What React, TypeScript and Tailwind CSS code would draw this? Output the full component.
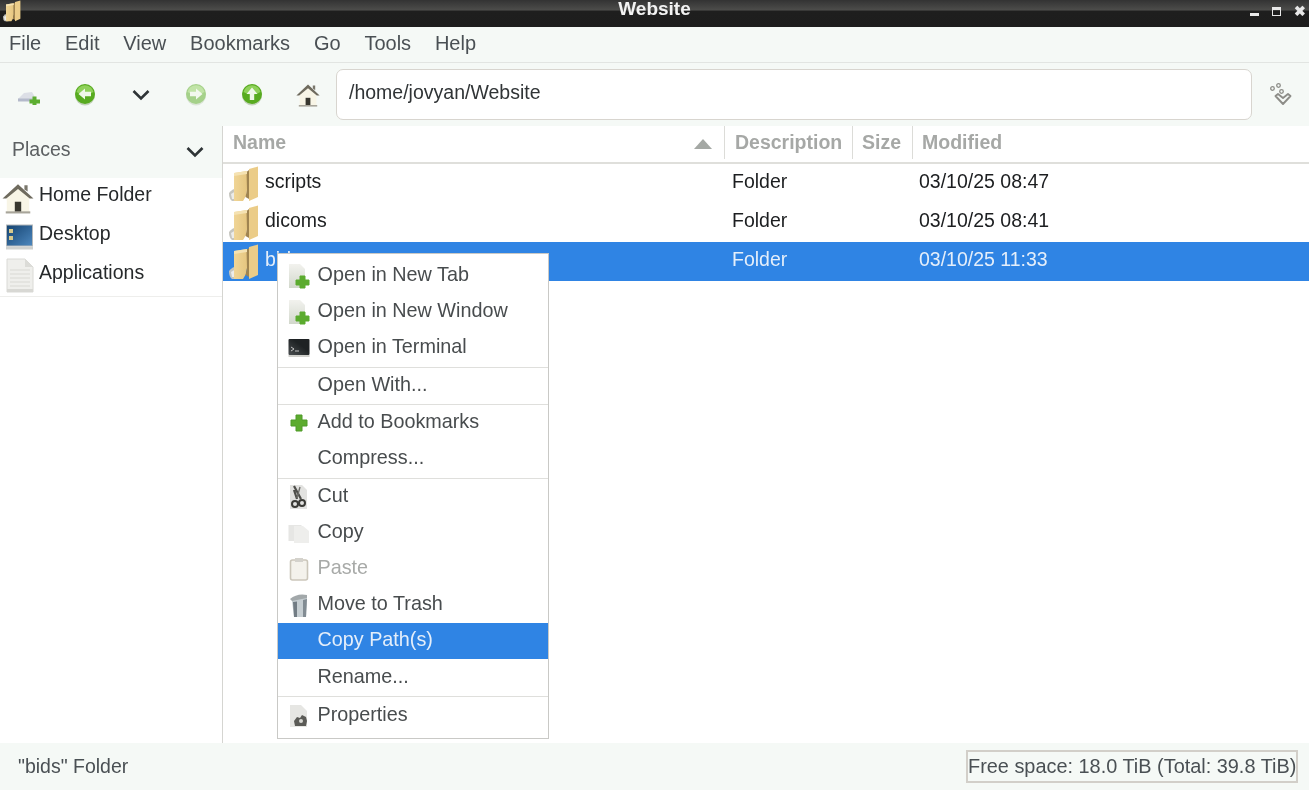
import type { ReactNode } from 'react';

const FolderIcon = ({ small = false }: { small?: boolean }) => (
  <svg viewBox="0 0 30 36" className={small ? 'h-[22px] w-[18px] shrink-0' : 'h-[36px] w-[30px] shrink-0'}>
    <defs>
      <linearGradient id="tan" x1="0" y1="0" x2="1" y2="0">
        <stop offset="0" stopColor="#f0d596" />
        <stop offset="1" stopColor="#e6c680" />
      </linearGradient>
    </defs>
    <path d="M0 27 Q3 23 8 22 L9 35 L3 35 Q0 33 0 27Z" fill="#c6c6c0" />
    <path d="M2 28 L7 25 L7 33 L3 33Z" fill="#ececea" />
    <path d="M5 7 Q12 6 18 5 L18 24 L17 30 L14 35 L5 35Z" fill="url(#tan)" />
    <path d="M17.5 6 L20 4 L20 33 L16.5 31 L18 24Z" fill="#a08450" />
    <path d="M20 3 L29 0.5 L29 31 L20 35Z" fill="#ebcc88" />
    <path d="M5 7 L18 5 L18 8 L5 10Z" fill="#f5e2b2" />
  </svg>
);

const GreenCircle = ({ dir, faded = false }: { dir: 'left' | 'right' | 'up'; faded?: boolean }) => {
  const arrow =
    dir === 'left'
      ? 'M4.5 11 L11 5.5 L11 8.8 L17 8.8 L17 13.2 L11 13.2 L11 16.5Z'
      : dir === 'right'
        ? 'M17.5 11 L11 5.5 L11 8.8 L5 8.8 L5 13.2 L11 13.2 L11 16.5Z'
        : 'M11 4.5 L16.5 11 L13.2 11 L13.2 17 L8.8 17 L8.8 11 L5.5 11Z';
  return (
    <svg viewBox="0 0 22 24" className={`h-[24px] w-[22px] ${faded ? 'opacity-50' : ''}`}>
      <circle cx="11" cy="12.5" r="10" fill="#c4d2bc" />
      <circle cx="11" cy="11" r="10" fill="#58ab20" />
      <path d="M2.5 9 A8.6 8 0 0 1 19.5 9 Q11 14 2.5 9Z" fill="#8fd15a" />
      <path d={arrow} fill="#f0f8e8" />
    </svg>
  );
};

const Chevron = () => (
  <svg viewBox="0 0 18 12" className="h-[12px] w-[18px]">
    <path d="M1.5 2 L9 9.5 L16.5 2" fill="none" stroke="#2e3436" strokeWidth="2.6" />
  </svg>
);

const HomeIcon = ({ big = false }: { big?: boolean }) => (
  <svg viewBox="0 0 30 30" className={big ? 'h-[32px] w-[32px] shrink-0' : 'h-[24px] w-[24px] shrink-0'}>
    <path d="M21 3 L24 3 L24 9 L21 7Z" fill="#7a776c" />
    <path d="M4.5 14 L15 5 L25.5 14 L25.5 28 L4.5 28Z" fill="#f8f5e6" />
    <path d="M0.5 15.5 L15 2 L29.5 15.5 L26 15.5 L15 6.5 L4 15.5Z" fill="#6f6b5e" />
    <path d="M12 18.5 L18 18.5 L18 28 L12 28Z" fill="#38372f" />
    <path d="M3.5 27.5 L26.5 27.5 L26.5 29.5 L3.5 29.5Z" fill="#a8a59a" />
  </svg>
);

const NewTabIcon = () => (
  <svg viewBox="0 0 24 16" className="h-[16px] w-[24px]">
    <path d="M1 10 L7 4 L15 3 L18 8 L18 12 L1 12Z" fill="#dcdfe6" />
    <path d="M1 9.5 L17 9.5 L17 12.5 L1 12.5Z" fill="#b4bacb" />
    <path d="M15.5 7.5 h4 v3 h3.5 v4 h-3.5 v1.5 h-4 v-1.5 h-3 v-4 h3Z" fill="#5cae30" />
  </svg>
);

const BookmarkGlyph = () => (
  <svg viewBox="0 0 24 24" className="h-[24px] w-[24px]">
    <g fill="none" stroke="#8d8d88" strokeWidth="1.3">
      <circle cx="3.5" cy="5.5" r="1.8" />
      <circle cx="9.5" cy="2.5" r="1.8" />
      <circle cx="12.5" cy="8.5" r="1.8" />
    </g>
    <path d="M6.5 13 L9 11 L14 15 L19 11 L21.5 13 L14 21Z" fill="#f5f9f6" stroke="#8d8d88" strokeWidth="1.9" strokeLinejoin="round" />
  </svg>
);

const DesktopIcon = () => (
  <svg viewBox="0 0 30 28" className="h-[28px] w-[30px] shrink-0">
    <defs>
      <linearGradient id="desk" x1="0" y1="0" x2="1" y2="1">
        <stop offset="0" stopColor="#14426f" />
        <stop offset="1" stopColor="#4d88bf" />
      </linearGradient>
    </defs>
    <rect x="1.5" y="2" width="26" height="21" fill="url(#desk)" stroke="#b4b8ba" strokeWidth="1" />
    <rect x="4" y="6" width="4" height="4" fill="#d8c98c" />
    <rect x="4" y="13" width="4" height="4" fill="#d8c98c" />
    <rect x="1" y="23.5" width="27" height="3" fill="#cfd1cf" />
  </svg>
);

const DocIcon = () => (
  <svg viewBox="0 0 28 36" className="h-[36px] w-[28px] shrink-0">
    <path d="M1 1 L19 1 L27 9 L27 34 L1 34Z" fill="#efefec" stroke="#dadad6" strokeWidth="1" />
    <path d="M19 1 L27 9 L19 9Z" fill="#dcdcd8" />
    <g stroke="#e0e0dc" strokeWidth="1.4">
      <path d="M4 12 H24" />
      <path d="M4 16 H24" />
      <path d="M4 20 H24" />
      <path d="M4 24 H24" />
      <path d="M4 28 H24" />
    </g>
    <path d="M1 31 H27 V34 H1Z" fill="#d8d8d4" />
  </svg>
);

const PageAddIcon = () => (
  <svg viewBox="0 0 22 26" className="h-[26px] w-[22px]">
    <defs>
      <linearGradient id="pg" x1="0" y1="0" x2="0" y2="1">
        <stop offset="0" stopColor="#f2f2ee" />
        <stop offset="1" stopColor="#d2d8cc" />
      </linearGradient>
    </defs>
    <path d="M1 1 L12 1 L17 6 L17 25 L1 25Z" fill="url(#pg)" />
    <path d="M12 13 h5 v4 h4 v5 h-4 v3 h-5 v-3 h-4 v-5 h4Z" fill="#5bab2e" stroke="#5bab2e" strokeWidth="1" strokeLinejoin="round" />
  </svg>
);

const TerminalIcon = () => (
  <svg viewBox="0 0 22 20" className="h-[20px] w-[22px]">
    <defs>
      <linearGradient id="term" x1="0" y1="1" x2="1" y2="0">
        <stop offset="0" stopColor="#4a4e50" />
        <stop offset="0.6" stopColor="#1e2224" />
      </linearGradient>
    </defs>
    <rect x="0.5" y="1" width="21" height="16" rx="1" fill="url(#term)" />
    <rect x="0.5" y="17" width="21" height="2" fill="#cfcfcb" />
    <path d="M3 9 L6 11 L3 13" fill="none" stroke="#d0d0d0" strokeWidth="0.9" />
    <path d="M7 13 H11" stroke="#d0d0d0" strokeWidth="0.9" />
  </svg>
);

const PlusIcon = () => (
  <svg viewBox="0 0 20 20" className="h-[20px] w-[20px]">
    <path d="M7 2 H13 V7 H18 V13 H13 V18 H7 V13 H2 V7 H7Z" fill="#5cab2e" stroke="#4f9a28" strokeWidth="1" strokeLinejoin="round" />
  </svg>
);

const CutIcon = () => (
  <svg viewBox="0 0 22 26" className="h-[26px] w-[22px]">
    <path d="M2 1 L14 1 L19 6 L19 25 L2 25Z" fill="#e2e2e0" />
    <path d="M6 2 L13 15 M9 15 L6 6" stroke="#4e4e4a" strokeWidth="2.2" />
    <path d="M12 3 L9 14" stroke="#6e6e6a" strokeWidth="1.4" />
    <circle cx="7" cy="20" r="3" fill="none" stroke="#3a3a36" strokeWidth="2" />
    <circle cx="14" cy="19" r="3" fill="none" stroke="#3a3a36" strokeWidth="2" />
  </svg>
);

const CopyIcon = () => (
  <svg viewBox="0 0 22 22" className="h-[22px] w-[22px]">
    <rect x="0.5" y="3" width="13" height="16" fill="#e6e6e4" />
    <path d="M6 4 L15 4 L21 9 L21 21 L6 21Z" fill="#eeeeec" />
  </svg>
);

const PasteIcon = () => (
  <svg viewBox="0 0 20 24" className="h-[24px] w-[20px]">
    <rect x="1.5" y="3" width="17" height="20" rx="2" fill="#f4f2ec" stroke="#cbc6ba" strokeWidth="1.6" />
    <rect x="6" y="1" width="8" height="4" fill="#d4d2cc" />
  </svg>
);

const TrashIcon = () => (
  <svg viewBox="0 0 20 26" className="h-[26px] w-[20px]">
    <path d="M1 7 Q8 1 18 3 L18 7 L4 10Z" fill="#a2a8aa" />
    <path d="M3 9 L18 6 L17 25 L5 25Z" fill="#c6ced2" />
    <path d="M4 10 L8 9.5 L8 25 L5 25Z" fill="#727c84" />
    <path d="M14 8 L18 7 L17 25 L14 25Z" fill="#828c93" />
  </svg>
);

const PropertiesIcon = () => (
  <svg viewBox="0 0 20 24" className="h-[24px] w-[20px]">
    <path d="M1 1 L12 1 L18 7 L18 23 L1 23Z" fill="#e6e6e3" />
    <path d="M5 17 L8 13 L11 14 L13 11 L17 13 L18 17 L17 22 L6 22Z" fill="#5b5b57" />
    <circle cx="12" cy="17" r="2" fill="#d8d8d4" />
  </svg>
);

type MenuRow = { label: string; icon?: ReactNode; disabled?: boolean; active?: boolean; low?: boolean };

const MenuItem = ({ label, icon, disabled, active, low }: MenuRow) => (
  <div
    className={`flex h-[36px] items-center ${low ? '' : 'pb-[2px]'} ${active ? 'bg-[#2f84e4] text-[#e4eefa]' : disabled ? 'text-[#a8aaa8]' : 'text-[#484c4e]'}`}
  >
    <div className="flex w-[40px] shrink-0 items-center justify-center pl-[1px] pt-[2px]">{icon}</div>
    <span className="-ml-[0.5px]">{label}</span>
  </div>
);

const Sep = ({ h }: { h: string }) => (
  <div className={`flex items-center ${h}`}>
    <div className="h-px w-full bg-[#dfdfdc]" />
  </div>
);

const ContextMenu = () => (
  <div className="absolute left-[277px] top-[253px] w-[272px] border border-[#c9c9c6] bg-white py-[4px] text-[19.8px]">
    <MenuItem label="Open in New Tab" icon={<PageAddIcon />} />
    <MenuItem label="Open in New Window" icon={<PageAddIcon />} />
    <MenuItem label="Open in Terminal" icon={<TerminalIcon />} />
    <Sep h="h-[2px]" />
    <MenuItem label="Open With..." />
    <Sep h="h-[1px]" />
    <MenuItem label="Add to Bookmarks" icon={<PlusIcon />} />
    <MenuItem label="Compress..." />
    <Sep h="h-[2px]" />
    <MenuItem label="Cut" icon={<CutIcon />} />
    <MenuItem label="Copy" icon={<CopyIcon />} />
    <MenuItem label="Paste" icon={<PasteIcon />} disabled />
    <MenuItem label="Move to Trash" icon={<TrashIcon />} />
    <MenuItem label="Copy Path(s)" active />
    <MenuItem label="Rename..." low />
    <Sep h="h-[3px]" />
    <MenuItem label="Properties" icon={<PropertiesIcon />} />
  </div>
);

const files = [
  { name: 'scripts', date: '03/10/25 08:47' },
  { name: 'dicoms', date: '03/10/25 08:41' },
  { name: 'bids', date: '03/10/25 11:33', selected: true },
];

const App = () => {
  return (
    <div className="relative flex h-screen flex-col overflow-hidden bg-white font-['Liberation_Sans',sans-serif] text-[19.5px] blur-[0.4px]">
      {/* title bar */}
      <div className="relative flex h-[27px] shrink-0 justify-center bg-[linear-gradient(#333333,#4d4d4b_38%,#1e1e1e_40%,#1d1d1d)]">
        <span className="text-[19px] font-bold leading-[17px] text-[#f2f2f2]">Website</span>
        <div className="absolute left-[3px] top-0">
          <FolderIcon small />
        </div>
        <div className="absolute right-[3px] top-[6px] flex items-center gap-[13px]">
          <div className="mt-[6px] h-[3px] w-[9px] bg-[#e8e8e8]" />
          <div className="h-[9px] w-[9px] border border-t-[3px] border-[#e8e8e8]" />
          <span className="text-[14px] font-bold leading-[10px] text-[#e8e8e8]">✖</span>
        </div>
      </div>

      {/* menu bar */}
      <div className="flex h-[36px] shrink-0 items-center gap-[23.8px] border-b border-[#e2e5e2] bg-[#f5f9f6] pb-[4px] pl-[9px] text-[20px] text-[#4a5054]">
        <span>File</span>
        <span>Edit</span>
        <span>View</span>
        <span>Bookmarks</span>
        <span>Go</span>
        <span>Tools</span>
        <span>Help</span>
      </div>

      {/* toolbar */}
      <div className="flex h-[63px] shrink-0 items-center bg-[#f5f9f6]">
        <div className="flex w-[336px] shrink-0 items-center">
          <div className="flex w-[58px] justify-center pt-[4px]"><NewTabIcon /></div>
          <div className="flex w-[54px] justify-center"><GreenCircle dir="left" /></div>
          <div className="flex w-[57px] justify-center"><Chevron /></div>
          <div className="flex w-[54px] justify-center"><GreenCircle dir="right" faded /></div>
          <div className="flex w-[57px] justify-center"><GreenCircle dir="up" /></div>
          <div className="flex w-[56px] justify-center"><HomeIcon /></div>
        </div>
        <div className="flex h-[51px] w-[916px] items-center rounded-[7px] border border-[#d8d5cf] bg-white pb-[4px] pl-[12px] text-[#303436]">
          /home/jovyan/Website
        </div>
        <div className="flex flex-1 justify-center"><BookmarkGlyph /></div>
      </div>

      {/* main */}
      <div className="flex min-h-0 flex-1">
        <div className="w-[223px] shrink-0 border-r border-[#d5d5d1]">
          <div className="flex h-[52px] items-center justify-between bg-[#f5f9f6] pb-[4px] pl-[12px] pr-[18px] text-[#5c6062]">
            <span>Places</span>
            <div className="pt-[4px]"><Chevron /></div>
          </div>
          <div className="flex h-[119px] flex-col border-b border-[#eeeeec] text-[#26292b]">
            <div className="flex h-[39px] items-center"><div className="flex w-[39px] justify-start pl-[2px]"><HomeIcon big /></div><span className="-mt-[6px]">Home Folder</span></div>
            <div className="flex h-[39px] items-center"><div className="flex w-[39px] justify-center"><DesktopIcon /></div><span className="-mt-[6px]">Desktop</span></div>
            <div className="flex h-[39px] items-center"><div className="flex w-[39px] justify-center"><DocIcon /></div><span className="-mt-[6px]">Applications</span></div>
          </div>
        </div>

        <div className="min-w-0 flex-1">
          <div className="flex h-[38px] border-b-2 border-[#dfdfdb] pb-[3px] font-bold text-[#a6a8a6]">
            <div className="flex w-[502px] items-center justify-between border-r border-[#dcdcd8] pl-[10px] pr-[12px]">
              <span>Name</span>
              <svg viewBox="0 0 18 10" className="mt-[3px] h-[10px] w-[18px]"><path d="M0 10 L9 0 L18 10Z" fill="#a4a8a4" /></svg>
            </div>
            <div className="flex w-[128px] items-center border-r border-[#dcdcd8] pl-[10px]"><span>Description</span></div>
            <div className="flex w-[60px] items-center border-r border-[#dcdcd8] pl-[9px]"><span>Size</span></div>
            <div className="flex flex-1 items-center pl-[9px]"><span>Modified</span></div>
          </div>
          {files.map((f) => (
            <div
              key={f.name}
              className={`flex h-[39px] items-center ${f.selected ? 'bg-[#2f84e4] text-[#e4eefa]' : 'text-[#1c1e20]'}`}
            >
              <div className="flex w-[509px] items-center">
                <div className="ml-[6px] w-[36px]"><FolderIcon /></div>
                <span className="-mt-[4px]">{f.name}</span>
              </div>
              <span className="-mt-[4px] w-[187px]">Folder</span>
              <span className="-mt-[4px]">{f.date}</span>
            </div>
          ))}
        </div>
      </div>

      {/* status bar */}
      <div className="flex h-[47px] shrink-0 items-center justify-between bg-[#f5f9f6] pl-[18px] pr-[11px] text-[#4a5054]">
        <span>"bids" Folder</span>
        <div className="flex h-[33px] w-[332px] items-center whitespace-nowrap border-2 border-[#d2cfc9] text-[19.9px]">
          Free space: 18.0 TiB (Total: 39.8 TiB)
        </div>
      </div>

      <ContextMenu />
    </div>
  );
};

export default App;
